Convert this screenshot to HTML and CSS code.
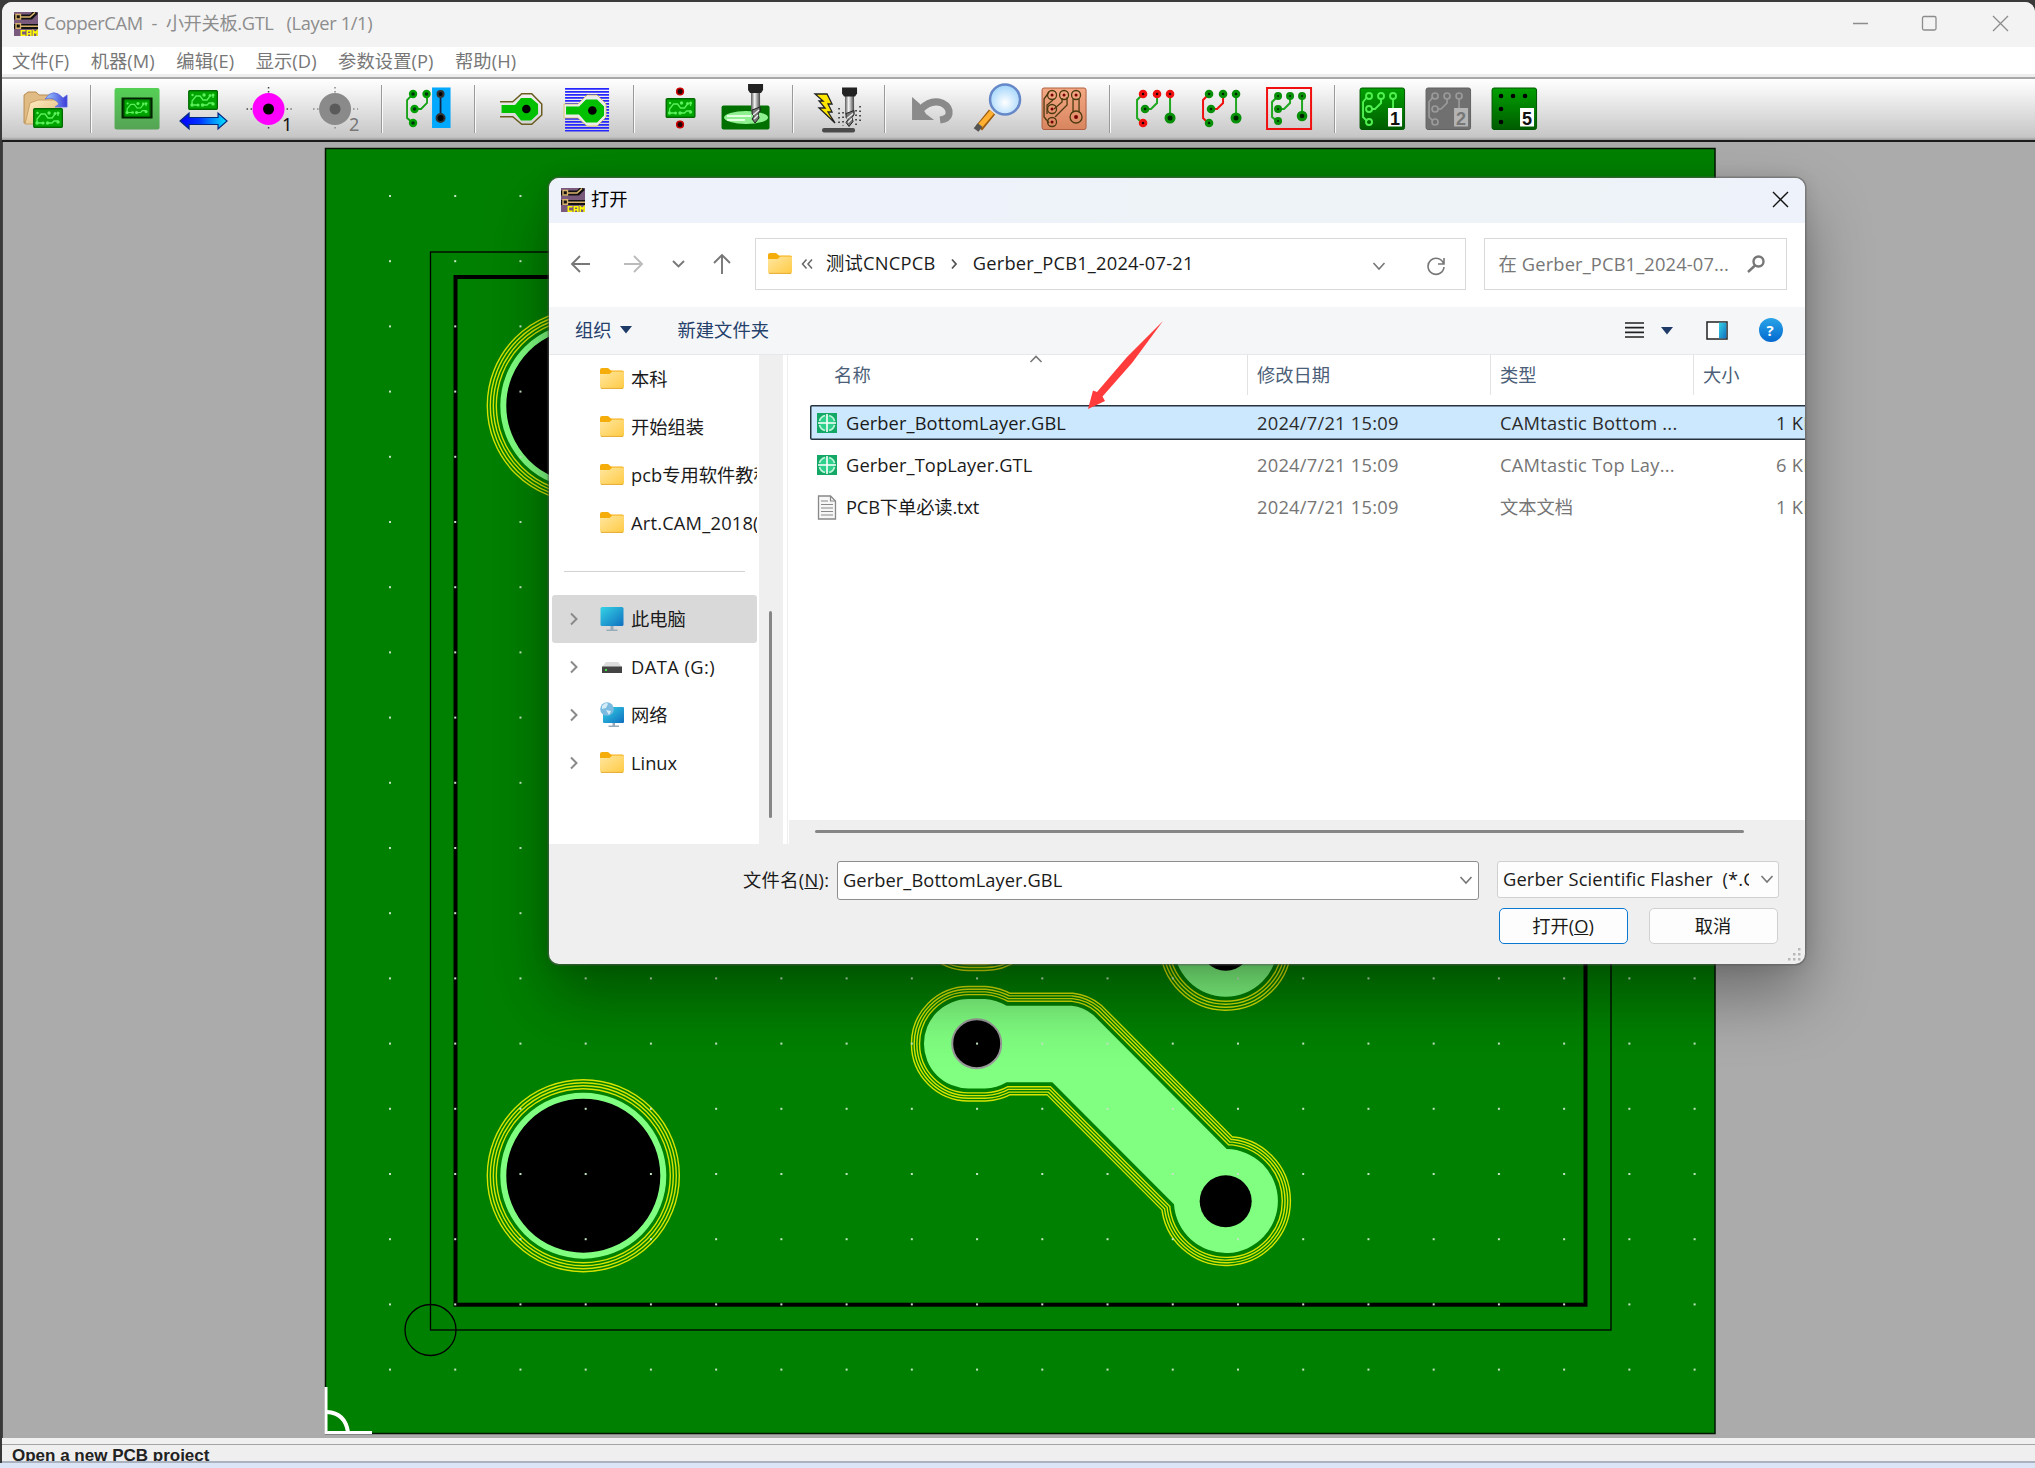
FILE: index.html
```html
<!DOCTYPE html>
<html lang="zh-CN">
<head>
<meta charset="utf-8">
<title>CopperCAM</title>
<link rel="stylesheet" href="styles.css">
</head>
<body>
<svg class="defs" width="0" height="0">
  <defs>
    <linearGradient id="gFolder" x1="0" y1="0" x2="1" y2="1"><stop offset="0" stop-color="#ffe6a0"/><stop offset="1" stop-color="#ffcb45"/></linearGradient>
    <linearGradient id="gScreen" x1="0" y1="0" x2="1" y2="1"><stop offset="0" stop-color="#35d3e6"/><stop offset="1" stop-color="#0f6fc0"/></linearGradient>
    <linearGradient id="gArrow" x1="0" y1="0" x2="1" y2="0"><stop offset="0" stop-color="#0000ff"/><stop offset=".4" stop-color="#0030ff"/><stop offset="1" stop-color="#00e8ff"/></linearGradient>
    <linearGradient id="gBoard" x1="0" y1="0" x2="0" y2="1"><stop offset="0" stop-color="#00a000"/><stop offset="1" stop-color="#005c00"/></linearGradient>
    <linearGradient id="gActive" x1="0" y1="0" x2="0" y2="1"><stop offset="0" stop-color="#55d055"/><stop offset="1" stop-color="#55a355"/></linearGradient>
    <linearGradient id="gCopper" x1="0" y1="0" x2="0" y2="1"><stop offset="0" stop-color="#f4a884"/><stop offset="1" stop-color="#d8855f"/></linearGradient>
    <linearGradient id="gSteel" x1="0" y1="0" x2="1" y2="0"><stop offset="0" stop-color="#555"/><stop offset=".4" stop-color="#f4f4f4"/><stop offset="1" stop-color="#444"/></linearGradient>
    <radialGradient id="gLens" cx=".5" cy=".6" r=".6"><stop offset="0" stop-color="#fff"/><stop offset="1" stop-color="#9fd4fb"/></radialGradient>
    <linearGradient id="gTan" x1="0" y1="0" x2="1" y2="1"><stop offset="0" stop-color="#fff0c8"/><stop offset="1" stop-color="#dcae6c"/></linearGradient>
    <linearGradient id="gSwoosh" x1="0" y1="0" x2="1" y2="0"><stop offset="0" stop-color="#9fd0ff"/><stop offset="1" stop-color="#3a3ad8"/></linearGradient>
    <linearGradient id="gHelp" x1="0" y1="0" x2="0" y2="1"><stop offset="0" stop-color="#2aa4e8"/><stop offset="1" stop-color="#0469cf"/></linearGradient>

    <symbol id="app" viewBox="0 0 24 24">
      <path fill="#7a5a7c" d="M0 0h24v24H0z"/>
      <path fill="none" stroke="#111" stroke-width="5" d="M0 5h17l5-5M0 14.500h24"/>
      <path fill="none" stroke="#d9b36c" stroke-width="1.600" d="M7 5h9l5-4.500M7 14.300h17"/>
      <path fill="#111" stroke="#d9b36c" stroke-width="1.400" d="M2 2.500h4.500v4.500H2zM2 11.800h4.500v4.500H2z"/>
      <path fill="none" stroke="#ff0" stroke-width="1.500" d="M11.500 18.800H7.300v4.400h4.200M13.300 24v-5.200h3.600V24M13.300 21.700h3.600M19.300 24v-5.200l1.900 2 1.900-2V24"/>
    </symbol>
    <symbol id="mini" viewBox="0 0 30 20">
      <rect x=".7" y=".7" width="28.600" height="18.600" rx="1" fill="#00a400" stroke="#006a00" stroke-width="1.400"/>
      <path fill="none" stroke="#5cf05c" stroke-width="1.300" d="M4 15v-4l4-5h4l3 4h4l3-4M5 15h5M14 15h5l2-2h4M25 5v3"/>
      <g fill="#5cf05c"><circle cx="4" cy="15" r="1.700"/><circle cx="10" cy="15" r="1.500"/><circle cx="14.500" cy="15" r="1.700"/><circle cx="25" cy="14" r="1.700"/><circle cx="16" cy="5" r="1.700"/><circle cx="22" cy="5.500" r="1.500"/><circle cx="25" cy="5" r="1.500"/><circle cx="4.500" cy="5" r="1.200"/></g>
    </symbol>
    <symbol id="drill" viewBox="0 0 18 40">
      <rect x="4" y="7" width="9" height="20" fill="url(#gSteel)"/>
      <path fill="#222" d="M1 0h15v6l-2 3H3L1 6z"/>
      <path fill="#777" stroke="#222" stroke-width="1" d="M5 26l8-3v4l-2 3 1 4-4 5-3-4 2-3-2-2z"/>
      <path stroke="#eee" stroke-width="1.300" d="M6 31l6-5M7 35l4-4"/>
    </symbol>
    <symbol id="folder" viewBox="0 0 24 21">
      <path fill="#f5ad0c" d="M0 2q0-2 2-2h6l3 2.500h11q2 0 2 2V8H0z"/>
      <path fill="url(#gFolder)" d="M0 6h9.500l3-2.500h10Q24 3.500 24 5V19q0 1.700-1.700 1.700H1.700Q0 20.700 0 19z"/>
      <path stroke="#e0a020" stroke-width=".8" d="M1 20.400h22"/>
    </symbol>
    <symbol id="gerber" viewBox="0 0 20 20">
      <path fill="#14a866" d="M0 0h20v20H0z"/>
      <circle cx="10" cy="10" r="7.800" fill="#2fd08c" stroke="#bff5dc" stroke-width="1.700" stroke-dasharray="8 4.250" stroke-dashoffset="-2"/>
      <path stroke="#fff" stroke-width="1.600" d="M10 1v18M1 10h18"/>
    </symbol>
    <symbol id="chev" viewBox="0 0 10 14"><path fill="none" stroke="#8a8a8a" stroke-width="2" d="M2 1.500L7.500 7 2 12.500"/></symbol>
    <symbol id="down" viewBox="0 0 14 10"><path fill="none" stroke="#777" stroke-width="1.600" d="M1.500 2L7 8l5.500-6"/></symbol>
    <pattern id="grid" x="389" y="195" width="65.230" height="65.200" patternUnits="userSpaceOnUse"><rect width="2" height="2" fill="#c4e6c4"/></pattern>
  </defs>
</svg>

<div class="window">
  <header class="titlebar">
    <svg class="appicon" width="24" height="24"><use href="#app"/></svg>
    <span class="title">CopperCAM&nbsp; -&nbsp; 小开关板.GTL&nbsp;&nbsp; (Layer 1/1)</span>
    <svg class="winctl" width="160" height="20" fill="none" stroke="#8c8c8c" stroke-width="1.300"><path d="M2 10.500h15"/><rect x="71.500" y="3.500" width="13.500" height="13.500" rx="1.500"/><path d="M142 3l15 15M157 3l-15 15"/></svg>
  </header>
  <nav class="menubar"><span>文件(F)</span><span>机器(M)</span><span>编辑(E)</span><span>显示(D)</span><span>参数设置(P)</span><span>帮助(H)</span></nav>

  <div class="toolbar">
    <svg class="tool" viewBox="0 0 66 60">
      <path fill="#e0bb84" stroke="#b78c50" d="M12 44V16l4-3h8l3 3h12l2 3v24z"/>
      <path fill="url(#gTan)" stroke="#c9a066" d="M13 45l5-21 8-3h24l-6 24z"/>
      <use href="#mini" x="21" y="29" width="30" height="20"/>
      <path fill="url(#gSwoosh)" stroke="#5a6ae0" stroke-width=".8" d="M33 20q8-12 18-1l4-3v12H43l4-3q-5-8-14-5z"/>
    </svg>
    <i class="sep"></i>
    <svg class="tool" viewBox="0 0 66 60"><rect x="10.500" y="9" width="45" height="41.500" rx="2" fill="url(#gActive)"/><rect x="17.500" y="18.500" width="31" height="21" fill="#020"/><use href="#mini" x="19" y="20" width="28" height="18"/></svg>
    <svg class="tool" viewBox="0 0 66 60"><use href="#mini" x="18" y="11" width="30" height="20"/><path fill="url(#gArrow)" stroke="#002a80" stroke-width="1.200" d="M10 42l9-8v4.500h29V34l9 8-9 8v-4.500H19V50z"/></svg>
    <svg class="tool" viewBox="0 0 66 60"><path stroke="#444" stroke-width="1.500" stroke-dasharray="1.500 2.500" d="M10.500 30h45M32.500 8v44"/><circle cx="32.500" cy="30" r="16" fill="#f0f"/><circle cx="32.500" cy="30" r="5.500"/><text x="46" y="52" class="num">1</text></svg>
    <svg class="tool" viewBox="0 0 66 60"><path stroke="#888" stroke-width="1.500" stroke-dasharray="1.500 2.500" d="M10 30h45M32 8v44"/><circle cx="32" cy="30" r="16" fill="#8a8a8a"/><circle cx="32" cy="30" r="5.500" fill="#5a5a5a"/><text x="46" y="52" class="num dim">2</text></svg>
    <i class="sep"></i>
    <svg class="tool" viewBox="0 0 66 60">
      <path fill="none" stroke="#10a010" stroke-width="1.800" d="M18 15l-6 6v18l6 5M32 15v9l-6 6h-6"/>
      <g fill="#031" stroke="#00a000" stroke-width="2.400"><circle cx="18" cy="15" r="3"/><circle cx="31.500" cy="15" r="3"/><circle cx="19.500" cy="30" r="3"/><circle cx="18" cy="44" r="3"/></g>
      <path fill="#00a8ff" d="M37 8.500h18.500V49H37z"/><path stroke="#124" stroke-width="1.800" d="M45.500 15v24"/><g stroke="#333" stroke-width="2" fill="#000"><circle cx="45.500" cy="15" r="3"/><circle cx="45.500" cy="39" r="4"/></g>
    </svg>
    <i class="sep"></i>
    <svg class="tool" viewBox="0 0 66 60"><path fill="none" stroke="#6a5c20" stroke-width="1.500" d="M12 22.700h12.700l9-8h10l10 10.300v11l-10 9.300h-10l-9-7.600H12"/><path fill="#00c000" d="M13.500 26H27l6-7h10l7 6v10l-7 6.500H33L27 34H13.500z"/><circle cx="38.300" cy="30" r="4.300"/></svg>
    <svg class="tool" viewBox="0 0 66 60"><path stroke="#2626ff" stroke-width="44" stroke-dasharray="1.800 1.200" d="M33 9v43.500"/><path fill="#ececec" stroke="#d8c050" stroke-width=".8" d="M10 25h14l9-9h10l9 9v13l-9 9H33l-9-8H10z"/><path fill="#00c000" d="M12 27.500h13l7-7h11l7 7v9l-7 7H32l-7-8H12z"/><circle cx="38.300" cy="31.500" r="4.300"/></svg>
    <i class="sep"></i>
    <svg class="tool" viewBox="0 0 66 60"><g fill="#200" stroke="#c00" stroke-width="1.600"><circle cx="33" cy="12.500" r="3.300"/><circle cx="33" cy="45.500" r="3.300"/></g><use href="#mini" x="17" y="19" width="33" height="20"/></svg>
    <svg class="tool" viewBox="0 0 66 60"><rect x="8.500" y="26.500" width="48" height="24" rx="2" fill="#007000"/><ellipse cx="33" cy="38.500" rx="22" ry="6.500" fill="#8ef08e"/><path stroke="#e4ffe4" stroke-width="2" d="M14 37h24M14 41h18"/><use href="#drill" x="34" y="5" width="18" height="40"/></svg>
    <i class="sep"></i>
    <svg class="tool" viewBox="0 0 66 60"><path fill="#ffe600" stroke="#222" stroke-width="1.300" d="M9 15h12l5 10h-4l4 8h-4l7 11-16-15h6l-6-7h4z"/><rect x="16" y="49" width="33" height="4.500" rx="2" fill="#4a4a4a"/><use href="#drill" x="35" y="7" width="18" height="43"/><g stroke="#222" stroke-width="1.500" stroke-dasharray="1.500 3"><path d="M33 29v18M37 33v14M50 31v18M54 27v18"/></g></svg>
    <i class="sep"></i>
    <svg class="tool" viewBox="0 0 66 60"><path fill="none" stroke="#8a8a8a" stroke-width="7" d="M22 30q10-10 21-6 8 4 7 11-1 5-9 6"/><path fill="#8a8a8a" d="M13 18v23h22l-8-6-6-10z"/></svg>
    <svg class="tool" viewBox="0 0 66 60"><path stroke="#9a5a10" stroke-width="8" d="M27 33L14 49"/><path stroke="#ffb030" stroke-width="5" d="M27 33L15 47"/><path stroke="#555" stroke-width="6" d="M15 46l-4 5"/><circle cx="40" cy="20.500" r="15" fill="url(#gLens)" stroke="#6688c8" stroke-width="2.500"/></svg>
    <svg class="tool" viewBox="0 0 66 60"><rect x="11" y="9" width="44" height="41.500" rx="2" fill="url(#gCopper)" stroke="#b06040"/><g fill="none" stroke="#4a3a10" stroke-width="1.300"><path d="M18 13l-5 7v18l5 6M22 21l-6 5v9M31 19v4l-8 7M36 18v8l-12 12M42 20v13M48 20v13"/><circle cx="21" cy="16" r="4.500"/><circle cx="33" cy="16" r="4.500"/><circle cx="45" cy="16" r="4.500"/><circle cx="21" cy="30" r="4.500"/><circle cx="21" cy="43" r="4.500"/><circle cx="45" cy="38" r="6"/></g><g fill="#700"><circle cx="21" cy="16" r="1.500"/><circle cx="33" cy="16" r="1.500"/><circle cx="45" cy="16" r="1.500"/><circle cx="21" cy="30" r="1.500"/><circle cx="21" cy="43" r="1.500"/><circle cx="45" cy="38" r="2"/></g></svg>
    <i class="sep"></i>
    <svg class="tool" viewBox="0 0 66 60"><path fill="none" stroke="#20a820" stroke-width="2" d="M19 15l-6 6v18l6 6M33 15v9l-6 6h-6M46 15v24"/><g fill="#200" stroke="#f01010" stroke-width="3"><circle cx="19" cy="15" r="2.800"/><circle cx="33" cy="15" r="2.800"/><circle cx="46" cy="15" r="2.800"/><circle cx="19" cy="44" r="2.800"/></g><g fill="#020" stroke="#089008" stroke-width="3"><circle cx="21" cy="30" r="2.800"/><circle cx="46" cy="39" r="4"/></g></svg>
    <svg class="tool" viewBox="0 0 66 60"><path fill="none" stroke="#20a820" stroke-width="2" d="M46 15v24"/><path fill="none" stroke="#f01010" stroke-width="2" d="M19 15l-6 6v18l6 6M33 15v9l-6 6h-6"/><g fill="#020" stroke="#089008" stroke-width="3"><circle cx="19" cy="15" r="2.800"/><circle cx="33" cy="15" r="2.800"/><circle cx="46" cy="15" r="2.800"/><circle cx="19" cy="44" r="2.800"/><circle cx="21" cy="30" r="2.800"/><circle cx="46" cy="39" r="4"/></g></svg>
    <svg class="tool" viewBox="0 0 66 60"><rect x="11" y="9" width="44" height="41" fill="none" stroke="#f01010" stroke-width="2"/><path fill="none" stroke="#20a820" stroke-width="2" d="M22 17l-6 6v15l6 5M34 17v7l-6 6h-6M46 17v20"/><g fill="#020" stroke="#089008" stroke-width="3"><circle cx="22" cy="17" r="2.500"/><circle cx="34" cy="17" r="2.500"/><circle cx="46" cy="17" r="2.500"/><circle cx="22" cy="30" r="2.500"/><circle cx="22" cy="42" r="2.500"/><circle cx="46" cy="37" r="3.800"/></g></svg>
    <i class="sep"></i>
    <svg class="tool" viewBox="0 0 66 60"><rect x="11" y="9" width="44.500" height="41.500" rx="2" fill="url(#gBoard)" stroke="#005800"/><g fill="none" stroke="#50f050" stroke-width="1.900"><path d="M18 18l-4 5v15l4 4M32 20v4l-6 6h-3M44 20v9"/><circle cx="20" cy="17" r="3"/><circle cx="32" cy="17" r="3"/><circle cx="44" cy="17" r="3"/><circle cx="20" cy="30" r="3"/><circle cx="20" cy="43" r="3"/></g><path fill="#fff" d="M39 29h14v18.500H39z"/><text x="41" y="46" class="layer">1</text></svg>
    <svg class="tool" viewBox="0 0 66 60"><rect x="11" y="9" width="44.500" height="41.500" rx="2" fill="#707070" stroke="#626262"/><g fill="none" stroke="#9a9a9a" stroke-width="1.700"><path d="M18 18l-4 5v15l4 4M32 20v4l-6 6h-3M44 20v9"/><circle cx="20" cy="17" r="3"/><circle cx="32" cy="17" r="3"/><circle cx="44" cy="17" r="3"/><circle cx="20" cy="30" r="3"/><circle cx="20" cy="43" r="3"/></g><path fill="#b4b4b4" d="M39 29h14v18.500H39z"/><text x="41" y="46" class="layer dim">2</text></svg>
    <svg class="tool" viewBox="0 0 66 60"><rect x="11" y="9" width="44.500" height="41.500" rx="2" fill="url(#gBoard)" stroke="#005800"/><g><circle cx="20" cy="17" r="2.300"/><circle cx="32" cy="17" r="2.300"/><circle cx="44" cy="17" r="2.300"/><circle cx="20" cy="30" r="2.300"/><circle cx="20" cy="43" r="2.300"/></g><path fill="#fff" d="M39 29h14v18.500H39z"/><text x="41" y="46" class="layer">5</text></svg>
  </div>

  <main class="canvas">
    <svg width="2032" height="1297" viewBox="3 142 2032 1297">
      <defs>
        <path id="track" d="M968.700 999H985Q997 1000 1006.700 1005.700H1071.700Q1084 1007 1093.300 1015L1226.700 1149A52 52 0 1 1 1174 1204.300L1052.300 1082.300H1006.700Q997 1088 985 1088.500H968.700A44.750 44.750 0 0 1 968.700 999Z"/>
      </defs>
      <rect x="325.500" y="148.500" width="1389.500" height="1285" fill="#008000" stroke="#001400" stroke-width="1.500"/>
      <g fill="none" stroke="#000"><rect x="430.500" y="252" width="1180.500" height="1078" stroke-width="1.300"/><rect x="455.500" y="277" width="1130" height="1027.700" stroke-width="4"/><circle cx="430.500" cy="1330" r="25.500" stroke-width="1.300"/></g>
      <g fill="none" stroke="#d8e400" stroke-width="1.400">
        <g id="mount"><circle cx="583.300" cy="1175.700" r="87"/><circle cx="583.300" cy="1175.700" r="90"/><circle cx="583.300" cy="1175.700" r="93"/><circle cx="583.300" cy="1175.700" r="96"/><circle cx="583.300" cy="1175.700" r="80" fill="#000" stroke="#80ff80" stroke-width="6"/></g>
        <use href="#mount" y="-770"/>
        <circle cx="1225.700" cy="944.700" r="56.500"/><circle cx="1225.700" cy="944.700" r="59.500"/><circle cx="1225.700" cy="944.700" r="62.500"/><circle cx="1225.700" cy="944.700" r="65.500"/>
        <rect x="911.700" y="856" width="130" height="114.500" rx="57"/><rect x="915" y="859" width="124" height="108.500" rx="54"/><rect x="918" y="862" width="118" height="102.500" rx="51"/>
      </g>
      <circle cx="1225.700" cy="944.700" r="52" fill="#80ff80"/><circle cx="1225.700" cy="944.700" r="26"/>
      <g fill="none" stroke-linejoin="round">
        <use href="#track" stroke="#d8e400" stroke-width="26.400"/><use href="#track" stroke="#008000" stroke-width="23.600"/>
        <use href="#track" stroke="#d8e400" stroke-width="21"/><use href="#track" stroke="#008000" stroke-width="18.200"/>
        <use href="#track" stroke="#d8e400" stroke-width="15.600"/><use href="#track" stroke="#008000" stroke-width="12.800"/>
        <use href="#track" stroke="#d8e400" stroke-width="10.200"/><use href="#track" stroke="#008000" stroke-width="7.400"/>
      </g>
      <use href="#track" fill="#80ff80"/>
      <circle cx="976.700" cy="1043.700" r="24.500" stroke="#999" stroke-width="2"/><circle cx="1225.700" cy="1201.300" r="26"/>
      <rect x="380" y="190" width="1320" height="1185" fill="url(#grid)"/>
      <path fill="none" stroke="#fff" stroke-width="3" d="M326 1387v45.500h46"/><path fill="none" stroke="#fff" stroke-width="4" d="M327 1412q18 1 21 20"/>
    </svg>
  </main>
  <footer class="status"><div class="gap"></div><div class="msg">Open a new PCB project</div></footer>
</div>

<section class="dialog">
  <header class="dlgtitle"><svg width="24" height="24"><use href="#app"/></svg><span>打开</span><svg class="x" width="17" height="17" stroke="#111" stroke-width="1.400"><path d="M1 1l15 15M16 1L1 16"/></svg></header>
  <div class="addrbar">
    <svg class="arrows" width="180" height="24" fill="none" stroke="#777" stroke-width="1.900"><path d="M20 12H2M10 4l-8 8 8 8"/><path stroke="#bbb" d="M54 12h18M64 4l8 8-8 8"/><path d="M103 9l5.500 5.500L114 9M152 22V3M144 11l8-8 8 8"/></svg>
    <div class="path">
      <svg width="24" height="21"><use href="#folder"/></svg>
      <svg class="back2" width="12" height="12" fill="none" stroke="#666" stroke-width="1.500"><path d="M5.500 1.500L1.500 6l4 4.500M11 1.500L7 6l4 4.500"/></svg>
      <span class="crumb c1">测试CNCPCB</span><svg class="gt" width="8" height="12" fill="none" stroke="#555" stroke-width="1.800"><path d="M2 1.500L6 6l-4 4.500"/></svg><span class="crumb c2">Gerber_PCB1_2024-07-21</span>
      <svg class="pathdown" width="14" height="10"><use href="#down"/></svg>
      <svg class="reload" width="20" height="20" fill="none" stroke="#777" stroke-width="1.600"><path d="M17.500 7.500A8 8 0 1 0 18 11M18 2v6h-6"/></svg>
    </div>
    <div class="search"><span>在 Gerber_PCB1_2024-07...</span><svg width="18" height="18" fill="none" stroke="#777" stroke-width="2.400"><circle cx="11.500" cy="6.500" r="5"/><path d="M8 10.500L1 17"/></svg></div>
  </div>
  <div class="cmdbar">
    <span>组织</span><svg class="tri" width="12" height="8"><path fill="#1e3a66" d="M0 0h12L6 7.500z"/></svg><span class="newf">新建文件夹</span>
    <svg class="views" width="160" height="26">
      <path stroke="#222" stroke-width="1.700" d="M1 6h19M1 10.700h19M1 15.300h19M1 20h19"/><path fill="#1e3a66" d="M37 10h12l-6 7.500z"/>
      <rect x="83" y="5" width="20" height="17" fill="#fff" stroke="#222" stroke-width="1.500"/><path fill="url(#gScreen)" d="M95 5.700h7.300v15.600H95z"/>
      <circle cx="147" cy="13" r="12" fill="url(#gHelp)"/><text x="142.500" y="18.500" class="q">?</text>
    </svg>
  </div>
  <div class="body">
    <aside class="tree">
      <div class="node"><i></i><svg width="24" height="21"><use href="#folder"/></svg><span>本科</span></div>
      <div class="node"><i></i><svg width="24" height="21"><use href="#folder"/></svg><span>开始组装</span></div>
      <div class="node"><i></i><svg width="24" height="21"><use href="#folder"/></svg><span>pcb专用软件教程</span></div>
      <div class="node"><i></i><svg width="24" height="21"><use href="#folder"/></svg><span class="lat">Art.CAM_2018(</span></div>
      <hr>
      <div class="node on"><svg class="ch" width="10" height="14"><use href="#chev"/></svg><svg width="24" height="24"><rect y="0" x=".5" width="23" height="19" rx="1.500" fill="url(#gScreen)"/><path fill="#9ab" d="M10.500 19h3v3.500h4V24h-11v-1.500h4z"/></svg><span>此电脑</span></div>
      <div class="node"><svg class="ch" width="10" height="14"><use href="#chev"/></svg><svg width="24" height="24"><path fill="#ddd" d="M6 7h12l4 5H2z"/><path fill="#444" d="M2 11.500h20V18H2z"/><path fill="#4d4" d="M5 14h2v2H5z"/></svg><span class="lat data">DATA (G:)</span></div>
      <div class="node"><svg class="ch" width="10" height="14"><use href="#chev"/></svg><svg width="24" height="26"><rect x="3" y="5" width="21" height="16" rx="1" fill="url(#gScreen)"/><path fill="#9ab" d="M12.500 21h2.500v2.500h4V25H8.500v-1.500h4z"/><circle cx="7" cy="7" r="6.800" fill="#7cbbe0"/><path fill="#d5ecf6" d="M2 4q4-5 6-2l-2 4-4 1zM6 8l5 1-2 4z"/></svg><span>网络</span></div>
      <div class="node"><svg class="ch" width="10" height="14"><use href="#chev"/></svg><svg width="24" height="21"><use href="#folder"/></svg><span>Linux</span></div>
    </aside>
    <div class="vscroll"><i></i></div>
    <div class="files">
      <div class="list">
        <div class="row head"><span class="name">名称</span><span>修改日期</span><span>类型</span><span>大小</span><svg class="sort" width="14" height="8" fill="none" stroke="#777" stroke-width="1.600"><path d="M1.500 7L7 1.500 12.500 7"/></svg></div>
        <div class="row sel"><span class="name"><svg width="20" height="20"><use href="#gerber"/></svg>Gerber_BottomLayer.GBL</span><span class="date">2024/7/21 15:09</span><span class="type">CAMtastic Bottom ...</span><span class="size">1 KB</span></div>
        <div class="row"><span class="name"><svg width="20" height="20"><use href="#gerber"/></svg>Gerber_TopLayer.GTL</span><span class="date">2024/7/21 15:09</span><span class="type">CAMtastic Top Lay...</span><span class="size">6 KB</span></div>
        <div class="row"><span class="name txt"><svg width="20" height="25"><path fill="#f6f6f6" stroke="#888" stroke-width="1.300" d="M1.500 1h12l5 5v18h-17z"/><path fill="none" stroke="#888" stroke-width="1.200" d="M13.500 1v5h5M4 6h7M4 9.500h12M4 13h12M4 16.500h12M4 20h12"/></svg>PCB下单必读.txt</span><span class="date">2024/7/21 15:09</span><span class="type cjk">文本文档</span><span class="size">1 KB</span></div>
      </div>
      <div class="hscroll"><i></i></div>
    </div>
  </div>
  <footer class="bottom">
    <div class="line"><label>文件名(<u>N</u>):</label><div class="input"><span>Gerber_BottomLayer.GBL</span><svg width="14" height="10"><use href="#down"/></svg></div><div class="select"><span>Gerber Scientific Flasher&nbsp; (*.GBL)</span><svg width="14" height="10"><use href="#down"/></svg></div></div>
    <div class="line btns"><button class="primary">打开(<u>O</u>)</button><button>取消</button></div>
    <svg class="grip" width="14" height="14" fill="#b8b8b8"><path d="M10 0h2.500v2.500H10zM10 5h2.500v2.500H10zM10 10h2.500v2.500H10zM5 5h2.500v2.500H5zM5 10h2.500v2.500H5zM0 10h2.500v2.500H0z"/></svg>
  </footer>
</section>

<svg class="pointer" width="76" height="88" viewBox="0 0 76 88"><path fill="#ff3b3b" d="M75 0L44 42 14.500 75.500 17 80 0 88 5 69.500 9 71 39 36z"/></svg>
</body>
</html>
```
FILE: styles.css
```css
* { box-sizing: border-box; }
body { margin: 0; width: 2035px; height: 1468px; overflow: hidden; position: relative; background: linear-gradient(#3a3a3a, #383838 1463px, #dbe5f5 1463px);
  font: 18.300px/1.3 "Open Sans", "Noto Sans CJK SC", sans-serif; color: #1a1a1a; }
svg { display: block; flex: none; }
.defs { position: absolute; }
.window { margin: 2px 0 0 2px; width: 2033px; height: 1461px; display: flex; flex-direction: column; border-radius: 10px 10px 0 0; overflow: hidden; background: #efefef; }
.titlebar { height: 45px; flex: none; background: #f3f3f3; display: flex; align-items: center; padding: 0 24px 3px 12px; color: #8d8d8d; }
.title { margin-left: 6px; white-space: pre; letter-spacing: -.38px; }
.appicon { margin-top: 2px; }
.winctl { margin-left: auto; }
.menubar { height: 27px; flex: none; background: #fff; display: flex; gap: 21.500px; padding: 0 0 0 10px; line-height: 27px; color: #777; letter-spacing: .07px; }
.toolbar { height: 68px; flex: none; display: flex; align-items: flex-start; border-top: 3px solid #eee; padding: 2px 0 0 9.500px; border-bottom: 2px solid #1c1c1c;
  background: linear-gradient(#a8a8a8 2px, #fff 2px, #f4f4f4 14px, #c6c6c6 60px, #999 63px); }
.tool { width: 66.100px; height: 60px; }
.sep { flex: none; width: 2px; height: 48px; margin: 6px 12.350px 0; background: linear-gradient(90deg, #9a9a9a 1px, #fafafa 1px); }
.num { font: 18px "Noto Sans", sans-serif; fill: #111; }
.dim { fill: #777 !important; }
.layer { font: bold 18px "Liberation Sans", sans-serif; fill: #111; }
.canvas { flex: none; height: 1296px; background: #ababab; border-left: 1px solid #444; overflow: hidden; }
.status { flex: 1; display: flex; flex-direction: column; overflow: hidden; border-bottom: 2px solid #abb2bf; }
.gap { height: 7px; flex: none; background: #f0f0f0; border-bottom: 1px solid #a4a4a4; }
.msg { padding-left: 10px; font: bold 17px/22px "Liberation Sans", sans-serif; color: #222; white-space: nowrap; }

.dialog { position: absolute; left: 549px; top: 178px; width: 1255.500px; height: 786px; display: flex; flex-direction: column; background: #efefef; border-radius: 10px; overflow: hidden;
  box-shadow: 0 0 0 1.500px rgba(90,90,90,.5), 0 32px 64px rgba(0,0,0,.36), 0 0 18px rgba(0,0,0,.12); }
.dlgtitle { height: 45px; flex: none; display: flex; align-items: center; padding: 0 16px 2px 12px; background: linear-gradient(100deg, #eef2fb 30%, #edf3f7 50%, #edf3f7 80%, #eef2fb); color: #000; }
.dlgtitle span { margin: -1px 0 0 6px; }
.x { margin-left: auto; }
.addrbar { height: 84px; flex: none; background: #fff; display: flex; align-items: center; padding: 0 18px 3px 21px; }
.path { margin-left: 5px; width: 711px; height: 52px; border: 1.500px solid #d9d9d9; display: flex; align-items: center; padding: 0 19px 0 12px; }
.back2 { margin-left: 9px; }
.crumb { white-space: nowrap; margin-top: -2px; }
.c1 { margin-left: 13px; letter-spacing: .25px; }
.gt { margin: 0 15px 0 14px; }
.c2 { letter-spacing: .22px; }
.pathdown { margin-left: auto; margin-top: 4px; }
.reload { margin: 5px 0 0 40px; }
.search { margin-left: auto; width: 303px; height: 52px; border: 1.500px solid #d9d9d9; display: flex; align-items: center; justify-content: space-between; padding: 1px 21px 0 14px; color: #777; letter-spacing: .15px; white-space: nowrap; }
.cmdbar { height: 48px; flex: none; background: #f4f6f8; border-bottom: 1.500px solid #e6e8ea; display: flex; align-items: center; padding: 0 21px 2px 26px; color: #24406b; }
.tri { margin: 0 46px 0 8px; }
.views { margin-left: auto; }
.q { font: bold 15px "Open Sans", sans-serif; fill: #fff; }
.body { height: 489px; flex: none; display: flex; background: #fff; }
.tree { width: 210px; flex: none; overflow: hidden; padding-right: 2px; }
.node { height: 48px; display: flex; align-items: center; margin-left: 3px; padding: 0 0 1px 17px; white-space: nowrap; overflow: hidden; }
.node i, .ch { width: 10px; flex: none; margin-right: 21px; }
.node span { margin-left: 7px; }
.node .lat { letter-spacing: .2px; }
.node .data { letter-spacing: .45px; }
.tree hr { border: 0; height: 1.500px; background: #d2d2d2; margin: 23.500px 12px 23px 15px; }
.on { background: #d9d9d9; border-radius: 3px; }
.vscroll { width: 24px; flex: none; background: #efefef; padding: 256px 0 0 10px; }
.vscroll i { display: block; width: 3px; height: 207px; background: #868686; border-radius: 2px; }
.files { flex: 1; min-width: 0; margin-left: 4px; border-left: 1px solid #eee; display: flex; flex-direction: column; }
.list { flex: 1; overflow: hidden; }
.row { position: relative; display: grid; grid-template-columns: 437px 243px 203px 120px; height: 35px; margin: 0 0 7px 22px; padding-top: 1px; align-items: center; color: #757575; white-space: nowrap; letter-spacing: .25px; }
.head { height: 40px; margin: 0 0 10px 22px; padding: 0; color: #4b6078; letter-spacing: 0; }
.head span { height: 40px; line-height: 40px; padding-left: 9px; border-left: 1.500px solid #e2e2e2; }
.head .name { border: 0; padding-left: 24px; color: inherit; }
.sort { position: absolute; left: 219px; top: 0; }
.name { display: flex; align-items: center; color: #1a1a1a; letter-spacing: .1px; }
.txt { letter-spacing: -.15px; }
.name svg { margin: 0 9px 0 7px; }
.row:not(.head) > span:not(.name) { padding-left: 10px; }
.row:not(.head) > .size { padding-left: 83px !important; }
.cjk { letter-spacing: 0; }
.sel { background: #cce8ff; box-shadow: inset 0 0 0 1.500px #26333f; border-radius: 2px; color: #2b2b2b; margin-right: -4px; }
.hscroll { height: 24px; flex: none; background: #efefef; padding: 10px 0 0 26px; margin-left: 1px; }
.hscroll i { display: block; width: 929px; height: 3px; background: #868686; border-radius: 2px; }
.bottom { position: relative; flex: 1; padding: 16.500px 25px 0 194px; }
.line { display: flex; align-items: flex-start; }
.line label { width: 94px; line-height: 37px; white-space: nowrap; letter-spacing: .3px; }
.input, .select { display: flex; align-items: center; background: #fff; height: 39px; width: 642px; border: 1.500px solid #8e8e8e; border-radius: 3px; padding: 0 5px; justify-content: space-between; white-space: nowrap; letter-spacing: .07px; }
.select { width: 282px; height: 37px; margin-left: 18px; border-color: #d0d0d0; background: #fdfdfd; padding-right: 4px; letter-spacing: .12px; }
.select span { width: 246px; overflow: hidden; }
.btns { justify-content: flex-end; gap: 21px; margin: 8.500px 2px 0 0; }
button { width: 129px; height: 36px; padding: 0 0 1px; border: 1.500px solid #d0d0d0; border-radius: 5px; background: #fdfdfd; font: inherit; color: #1a1a1a; }
.primary { border-color: #0a78d0; }
.grip { position: absolute; right: 3px; bottom: 2px; }
.pointer { position: absolute; left: 1088px; top: 321px; }
```
